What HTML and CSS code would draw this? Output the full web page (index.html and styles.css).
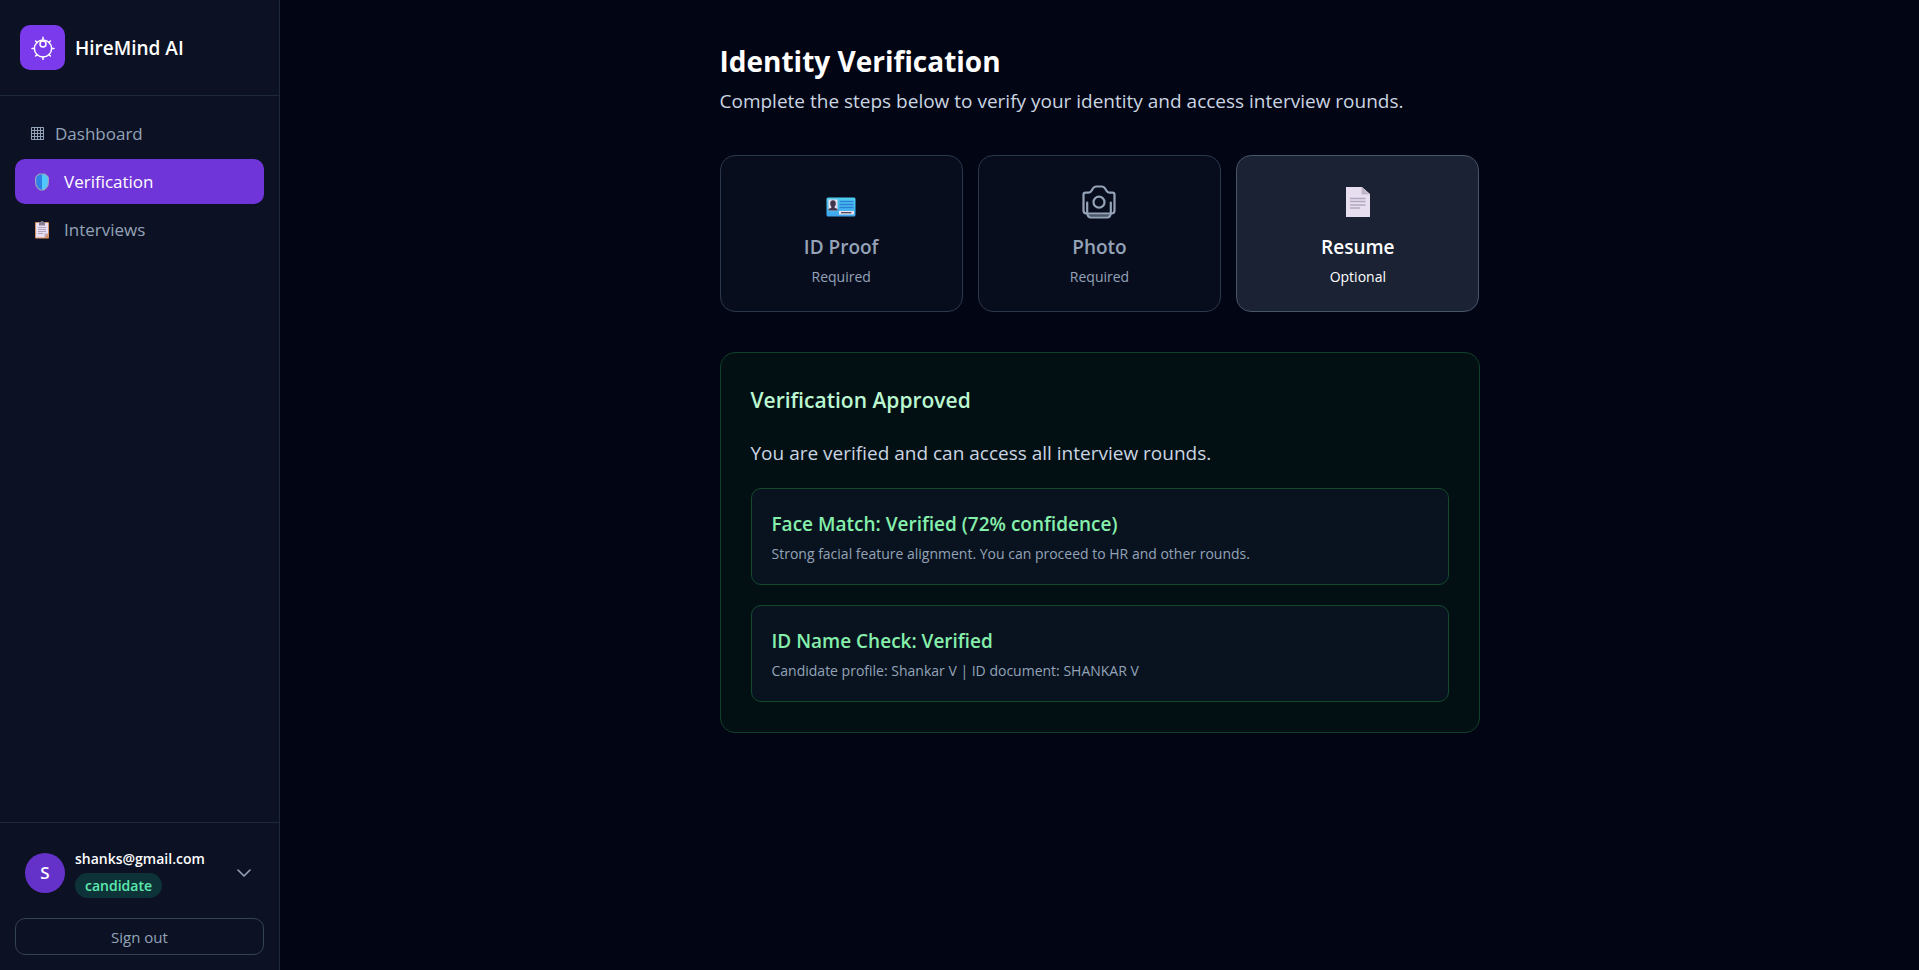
FILE: index.html
```html
<!DOCTYPE html>
<html lang="en">
<head>
<meta charset="utf-8">
<title>HireMind AI – Identity Verification</title>
<link rel="stylesheet" href="styles.css">
</head>
<body>
<div class="app">
  <aside class="sidebar">
    <div class="brand">
      <span class="brand-logo">
        <svg width="24" height="24" viewBox="0 0 24 24" fill="none" stroke="currentColor" stroke-width="1.5" stroke-linecap="round" aria-hidden="true">
          <circle cx="12" cy="12.500" r="8.600"/>
          <circle cx="12" cy="8" r="3"/>
          <path d="M12 1.200v2.300M12 21v2.300M1 12.500h2.300M20.700 12.500H23M4.600 5l1.500 1.500M17.900 6.500L19.400 5M4.600 20l1.500-1.500M17.900 18.500l1.500 1.500"/>
        </svg>
      </span>
      <span class="brand-name">HireMind AI</span>
    </div>
    <nav class="nav">
      <a class="nav-link nav-link-compact" href="#">
        <svg width="13" height="13" viewBox="0 0 13 13" aria-hidden="true"><path d="M.5.500h12v12H.5zM3.500.5v12M6.500.5v12M9.500.5v12M.5 3.500h12M.5 6.500h12M.5 9.500h12" fill="none" stroke="currentColor" stroke-width="1"/></svg>
        <span>Dashboard</span>
      </a>
      <a class="nav-link nav-link-active" href="#" aria-current="page">
        <svg width="14" height="18" viewBox="0 0 14 18" aria-hidden="true">
          <path d="M4 .5H10L13 3Q14 4 14 6V9Q14 14.500 9 17.500H5Q0 14.500 0 9V6Q0 4 1 3z" fill="#9aa3bd"/>
          <path d="M7 1.500H4.500L2 3.600Q1.200 4.500 1.200 6V9Q1.200 14 5.500 16.500H7z" fill="#2f7fe8"/>
          <path d="M7 1.500H9.500L12 3.600Q12.800 4.500 12.800 6V9Q12.800 14 8.500 16.500H7z" fill="#50c8fb"/>
        </svg>
        <span>Verification</span>
      </a>
      <a class="nav-link" href="#">
        <svg width="14" height="18" viewBox="0 0 14 18" aria-hidden="true">
          <rect x="0" y="1" width="14" height="16.500" rx="1" fill="#d99362"/>
          <path d="M1 2h12v10.500L9.500 16.500H1z" fill="#e9def2"/>
          <path d="M13 12.500L9.500 16.500V12.500z" fill="#b9a8ca"/>
          <path d="M4 1h1.500q0-1 1.500-1t1.500 1H10v3.500H4z" fill="#8a7f92"/>
          <path d="M3 6.500h8M3 8.500h8M3 10.500h8M3 12.500h5" stroke="#b1a4bf" stroke-width="1"/>
        </svg>
        <span>Interviews</span>
      </a>
    </nav>
    <div class="account">
      <button class="profile" type="button">
        <span class="avatar">S</span>
        <span class="profile-text">
          <span class="profile-mail">shanks@gmail.com</span>
          <span class="role">candidate</span>
        </span>
        <svg class="chevron" width="14" height="8" viewBox="0 0 14 8" fill="none" stroke="currentColor" stroke-width="1.600" stroke-linecap="round" stroke-linejoin="round" aria-hidden="true"><path d="M1 1l6 6 6-6"/></svg>
      </button>
      <button class="sign-out" type="button">Sign out</button>
    </div>
  </aside>

  <main class="main">
    <div class="content">
      <header class="page-head">
        <h1>Identity Verification</h1>
        <p>Complete the steps below to verify your identity and access interview rounds.</p>
      </header>

      <div class="steps">
        <button class="step" type="button">
          <span class="step-icon step-icon-low">
            <svg width="30" height="20" viewBox="0 0 30 20" aria-hidden="true">
              <defs><linearGradient id="idcard" x1="0" y1="0" x2="0" y2="1"><stop offset="0" stop-color="#4fcdf0"/><stop offset="1" stop-color="#3fa4ee"/></linearGradient></defs>
              <rect x=".5" y=".5" width="29" height="19" rx="1.500" fill="url(#idcard)"/>
              <rect x="2.500" y="2.500" width="9" height="11" fill="#e4deea"/>
              <path d="M7 3.200c2 0 2.800 1.400 2.800 3.200S8.900 9.300 8.600 9.700v1L11.500 12v1.500h-9V12l2.900-1.300v-1C5.100 9.300 4.200 8.200 4.200 6.400S5 3.200 7 3.200z" fill="#41364b"/>
              <path d="M13.500 4.500h14M13.500 7.500h14M13.500 10.500h14" stroke="#2a7fd4" stroke-width="1.300"/>
              <rect x="13" y="14" width="15" height="3.500" fill="#e8e3ee"/>
              <path d="M15 15.700h10.500" stroke="#41364b" stroke-width="1.200"/>
            </svg>
          </span>
          <span class="step-name">ID Proof</span>
          <span class="step-note">Required</span>
        </button>
        <button class="step" type="button">
          <span class="step-icon">
            <svg width="34" height="34" viewBox="0 0 34 34" fill="none" stroke="currentColor" stroke-width="2.200" stroke-linecap="round" stroke-linejoin="round" aria-hidden="true">
              <path d="M1.500 9.500Q1.500 7.600 3.500 7.600H6.500Q8.500 7.500 9.700 5.500L10.700 3.800Q12 1.500 14 1.500H20Q22 1.500 23.300 3.800L24.300 5.500Q25.500 7.500 27.500 7.600H30.500Q32.500 7.600 32.500 9.500V25.500Q32.500 28.500 29.500 28.500H4.500Q1.500 28.500 1.500 25.500z"/>
              <circle cx="17" cy="17.200" r="5.500"/>
              <path d="M5.200 17.500V28Q5.500 32.500 9 32.500H25Q28.500 32.500 28.800 28V17.500"/>
              <path d="M7 30.500h20" stroke-opacity=".5"/>
            </svg>
          </span>
          <span class="step-name">Photo</span>
          <span class="step-note">Required</span>
        </button>
        <button class="step step-active" type="button">
          <span class="step-icon">
            <svg width="24" height="30" viewBox="0 0 24 30" aria-hidden="true">
              <path d="M0 0h16l8 7v23H0z" fill="#e7deef"/>
              <path d="M15.500 0L23.500 7.500h-8z" fill="#bfb5c9"/>
              <path d="M4 11.500h15.500M4 14.500h15.500M4 18h15.500M4 21h10" stroke="#b3a8bf" stroke-width="1.500"/>
            </svg>
          </span>
          <span class="step-name">Resume</span>
          <span class="step-note">Optional</span>
        </button>
      </div>

      <section class="result">
        <h2>Verification Approved</h2>
        <p class="result-text">You are verified and can access all interview rounds.</p>
        <div class="check">
          <h3>Face Match: Verified (72% confidence)</h3>
          <p>Strong facial feature alignment. You can proceed to HR and other rounds.</p>
        </div>
        <div class="check">
          <h3>ID Name Check: Verified</h3>
          <p>Candidate profile: Shankar V | ID document: SHANKAR V</p>
        </div>
      </section>
    </div>
  </main>
</div>
</body>
</html>
```
FILE: styles.css
```css
*,
*::before,
*::after {
  box-sizing: border-box;
}

body {
  margin: 0;
  background: #020514;
  color: #fff;
  font-family: "Open Sans", "Noto Sans", sans-serif;
  font-size: 19px;
  line-height: 30px;
}

h1, h2, h3, p {
  margin: 0;
}

button {
  font: inherit;
  color: inherit;
  cursor: pointer;
}

.app {
  display: flex;
  min-height: 100vh;
}

/* Sidebar */
.sidebar {
  display: flex;
  flex-direction: column;
  flex: 0 0 280px;
  background: #0c1224;
  border-right: 1px solid #1d283a;
}

.brand {
  display: flex;
  align-items: center;
  gap: 10px;
  padding: 25px 20px;
  border-bottom: 1px solid #1d283a;
}

.brand-logo {
  display: grid;
  place-items: center;
  width: 45px;
  height: 45px;
  border-radius: 10px;
  background: #7c3aed;
}

.brand-name {
  font-size: 19px;
  font-weight: 600;
}

.nav {
  display: flex;
  flex-direction: column;
  flex: 1;
  gap: 3px;
  padding: 15px;
}

.nav-link {
  display: flex;
  align-items: center;
  gap: 15px;
  height: 45px;
  padding: 0 20px;
  border-radius: 10px;
  color: #94a3b8;
  font-size: 17px;
  text-decoration: none;
}

.nav-link-compact {
  gap: 11px;
  padding: 0 16px;
}

.nav-link-active {
  background: #7035d9;
  color: #fff;
}

.account {
  display: flex;
  flex-direction: column;
  gap: 20px;
  padding: 25px 15px 15px;
  border-top: 1px solid #1d283a;
}

.profile {
  display: flex;
  align-items: center;
  gap: 10px;
  padding: 0 13px 0 10px;
  border: 0;
  background: none;
  text-align: left;
}

.avatar {
  display: grid;
  place-items: center;
  width: 40px;
  height: 40px;
  border-radius: 50%;
  background: #6532c9;
  font-size: 17px;
  font-weight: 600;
}

.profile-text {
  display: flex;
  flex-direction: column;
  align-items: flex-start;
  flex: 1;
  gap: 3px;
}

.profile-mail {
  font-size: 14px;
  font-weight: 600;
  line-height: 22px;
}

.role {
  padding: 0 10px;
  border-radius: 13px;
  background: #0d3338;
  color: #5ee9b0;
  font-size: 14px;
  font-weight: 600;
  line-height: 25px;
}

.chevron {
  color: #94a3b8;
}

.sign-out {
  height: 37px;
  padding: 0;
  border: 1px solid #334155;
  border-radius: 10px;
  background: none;
  color: #94a3b8;
  font-size: 15px;
  line-height: 20px;
}

/* Main column */
.main {
  flex: 1;
  padding: 41px 30px;
}

.content {
  max-width: 760px;
  margin: 0 auto;
}

.page-head {
  margin-bottom: 39px;
}

h1 {
  font-size: 28px;
  font-weight: 700;
  line-height: 40px;
}

.page-head p {
  padding-top: 5px;
  color: #cbd5e1;
}

.steps {
  display: grid;
  grid-template-columns: repeat(3, 1fr);
  gap: 15px;
  margin-bottom: 40px;
}

.step {
  display: flex;
  flex-direction: column;
  align-items: center;
  padding: 23px 20px 24px;
  border: 1px solid #2b384b;
  border-radius: 15px;
  background: #080d1e;
  color: #94a3b8;
}

.step-active {
  border-color: #475569;
  background: #1a2233;
  color: #fff;
}

.step-icon {
  display: grid;
  place-items: center;
  height: 45px;
  margin-bottom: 3px;
}

.step-icon svg {
  display: block;
}

.step-icon-low {
  padding-top: 10px;
}

.step-name {
  font-weight: 600;
  line-height: 40px;
}

.step-note {
  font-size: 14px;
  line-height: 20px;
}

/* Result panel */
.result {
  padding: 30px;
  border: 1px solid #114028;
  border-radius: 15px;
  background: #021014;
}

h2 {
  margin-bottom: 20px;
  color: #bbf7d0;
  font-size: 21px;
  font-weight: 600;
  line-height: 35px;
}

.result-text {
  margin-bottom: 20px;
  color: #cbd5e1;
}

.check {
  padding: 20px 20px 18px;
  border: 1px solid #134a2d;
  border-radius: 10px;
  background: #08131f;
}

.check + .check {
  margin-top: 20px;
}

h3 {
  color: #86efac;
  font-size: 19px;
  font-weight: 600;
  line-height: 30px;
}

.check p {
  margin-top: 2px;
  color: #94a3b8;
  font-size: 14px;
  line-height: 25px;
}
```
